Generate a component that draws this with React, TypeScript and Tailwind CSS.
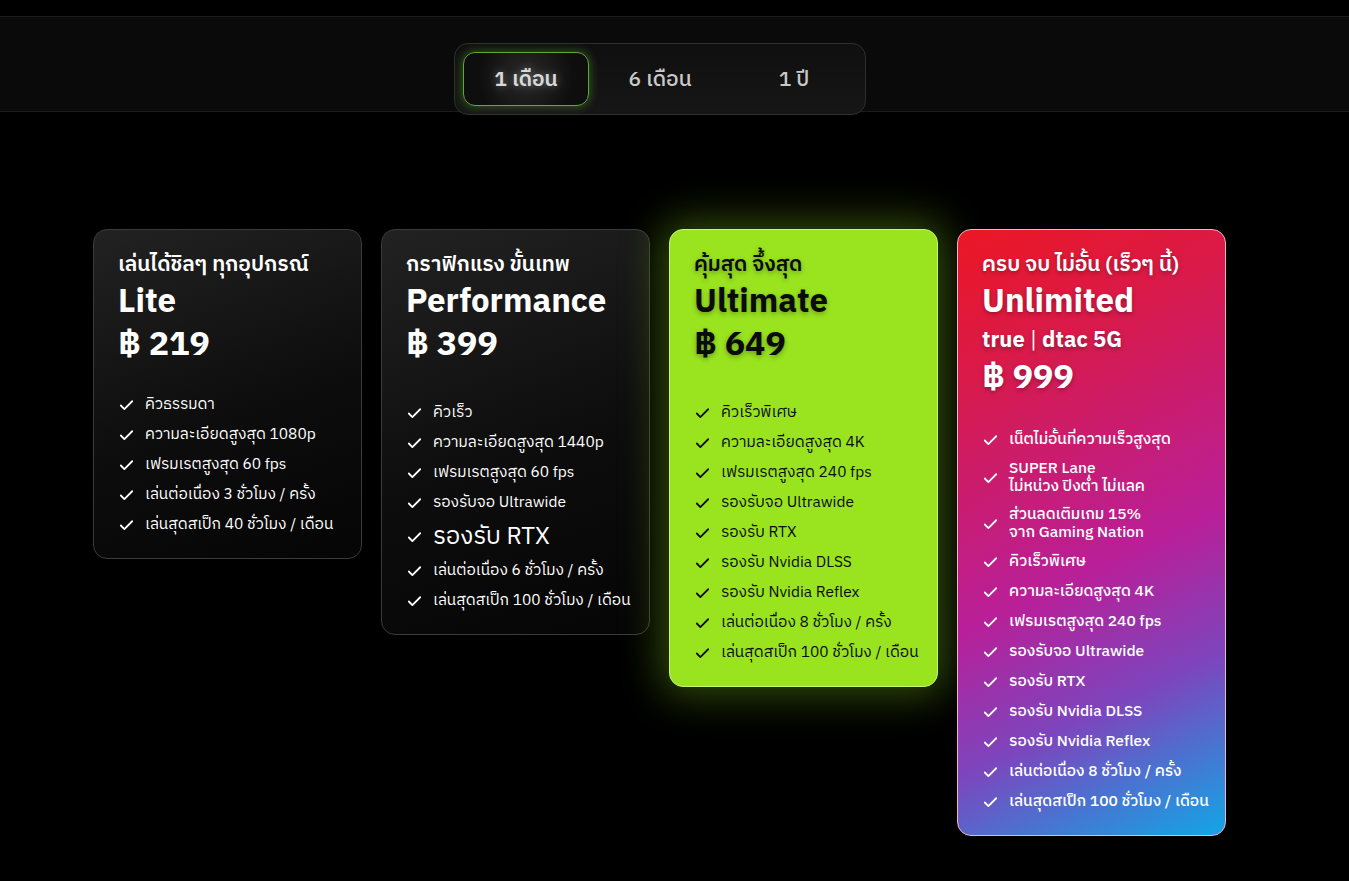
import { Check } from "lucide-react";

type Feature = { text: string; big?: boolean };

type Plan = {
  tagline: string;
  name: string;
  sub?: string;
  price: string;
  listTop: string;
  features: Feature[];
  variant: "dark" | "lime" | "red";
};

const plans: Plan[] = [
  {
    tagline: "เล่นได้ชิลๆ ทุกอุปกรณ์",
    name: "Lite",
    price: "฿ 219",
    variant: "dark",
    listTop: "mt-[22px]",
    features: [
      { text: "คิวธรรมดา" },
      { text: "ความละเอียดสูงสุด 1080p" },
      { text: "เฟรมเรตสูงสุด 60 fps" },
      { text: "เล่นต่อเนื่อง 3 ชั่วโมง / ครั้ง" },
      { text: "เล่นสุดสเป็ก 40 ชั่วโมง / เดือน" },
    ],
  },
  {
    tagline: "กราฟิกแรง ขั้นเทพ",
    name: "Performance",
    price: "฿ 399",
    variant: "dark",
    listTop: "mt-[30px]",
    features: [
      { text: "คิวเร็ว" },
      { text: "ความละเอียดสูงสุด 1440p" },
      { text: "เฟรมเรตสูงสุด 60 fps" },
      { text: "รองรับจอ Ultrawide" },
      { text: "รองรับ RTX", big: true },
      { text: "เล่นต่อเนื่อง 6 ชั่วโมง / ครั้ง" },
      { text: "เล่นสุดสเป็ก 100 ชั่วโมง / เดือน" },
    ],
  },
  {
    tagline: "คุ้มสุด จึ้งสุด",
    name: "Ultimate",
    price: "฿ 649",
    variant: "lime",
    listTop: "mt-[30px]",
    features: [
      { text: "คิวเร็วพิเศษ" },
      { text: "ความละเอียดสูงสุด 4K" },
      { text: "เฟรมเรตสูงสุด 240 fps" },
      { text: "รองรับจอ Ultrawide" },
      { text: "รองรับ RTX" },
      { text: "รองรับ Nvidia DLSS" },
      { text: "รองรับ Nvidia Reflex" },
      { text: "เล่นต่อเนื่อง 8 ชั่วโมง / ครั้ง" },
      { text: "เล่นสุดสเป็ก 100 ชั่วโมง / เดือน" },
    ],
  },
  {
    tagline: "ครบ จบ ไม่อั้น (เร็วๆ นี้)",
    name: "Unlimited",
    sub: "true | dtac 5G",
    price: "฿ 999",
    variant: "red",
    listTop: "mt-[24px]",
    features: [
      { text: "เน็ตไม่อั้นที่ความเร็วสูงสุด" },
      { text: "SUPER Lane\nไม่หน่วง ปิงต่ำ ไม่แลค" },
      { text: "ส่วนลดเติมเกม 15%\nจาก Gaming Nation" },
      { text: "คิวเร็วพิเศษ" },
      { text: "ความละเอียดสูงสุด 4K" },
      { text: "เฟรมเรตสูงสุด 240 fps" },
      { text: "รองรับจอ Ultrawide" },
      { text: "รองรับ RTX" },
      { text: "รองรับ Nvidia DLSS" },
      { text: "รองรับ Nvidia Reflex" },
      { text: "เล่นต่อเนื่อง 8 ชั่วโมง / ครั้ง" },
      { text: "เล่นสุดสเป็ก 100 ชั่วโมง / เดือน" },
    ],
  },
];

const cardStyles = {
  dark: "border-[#3b3b3b] bg-[linear-gradient(160deg,#222222_0%,#0d0d0d_55%,#050505_100%)] text-white",
  lime: "border-[#c8f56a] bg-[#99e31f] text-[#0b0b0b] shadow-[0_0_40px_8px_rgba(140,220,30,0.35)]",
  red: "border-[#f3b3c8] bg-[linear-gradient(155deg,#ec1723_0%,#d81a4c_22%,#b91f98_55%,#7d45bd_75%,#11a6e6_100%)] text-white",
};

function PlanCard({ plan }: { plan: Plan }) {
  const lime = plan.variant === "lime";
  const red = plan.variant === "red";
  const shadow = lime
    ? "[text-shadow:0_2px_5px_rgba(0,0,0,0.3)]"
    : red
      ? "[text-shadow:0_2px_4px_rgba(0,0,0,0.3)]"
      : "";

  return (
    <div
      className={`w-[269px] shrink-0 rounded-[14px] border px-[24px] pt-[21px] pb-[18px] ${cardStyles[plan.variant]}`}
    >
      <div className={shadow}>
        <p className="text-[21px] font-semibold leading-[28px]">{plan.tagline}</p>
        <p className="mt-[5px] text-[33px] font-bold leading-[38px]">{plan.name}</p>
        {plan.sub && (
          <p className="mt-[2px] text-[22px] font-bold leading-[34px]">
            true <span className="font-normal">|</span> dtac 5G
          </p>
        )}
        <p className={`${plan.sub ? "-mt-[3px]" : ""} text-[34px] font-bold leading-[46px]`}>
          {plan.price}
        </p>
      </div>

      <ul className={`${plan.listTop} flex flex-col`}>
        {plan.features.map((f) => (
          <li
            key={f.text}
            className={`flex items-center gap-[10px] py-[5px] ${f.big ? "min-h-[38px]" : "min-h-[30px]"} ${
              red ? "font-medium" : ""
            }`}
          >
            <Check size={17} strokeWidth={2.5} className="shrink-0" />
            <span
              className={`whitespace-pre ${
                f.big ? "text-[24px] leading-[28px]" : "text-[15.5px] leading-[18px]"
              }`}
            >
              {f.text}
            </span>
          </li>
        ))}
      </ul>
    </div>
  );
}

export default function App() {
  const periods = ["1 เดือน", "6 เดือน", "1 ปี"];

  return (
    <div className="min-h-[881px] bg-black pt-[16px] font-['IBM_Plex_Sans_Thai','Noto_Sans_Thai','Noto_Sans','Liberation_Sans',sans-serif]">
      <div className="h-[96px] border-y border-[#1c1c1c] bg-[#0a0a0a]">
        <div className="flex w-[1320px] justify-center pt-[26px]">
          <div className="flex h-[72px] gap-[8px] rounded-[14px] border border-[#2f2f2f] bg-[linear-gradient(180deg,#0f0f0f,#161616)] p-[8px]">
            {periods.map((p, i) => (
              <button
                key={p}
                className={`flex w-[126px] items-center justify-center rounded-[12px] pt-[3px] text-[21px] ${
                  i === 0
                    ? "border border-[#5fa83a] bg-[radial-gradient(circle_at_50%_45%,#2a2a2a,#0e0e0e_70%)] font-semibold text-[#d8d8d8] shadow-[0_0_10px_1px_rgba(90,170,50,0.45)] [text-shadow:0_0_8px_rgba(255,255,255,0.35)]"
                    : "font-medium text-[#c9c9c9]"
                }`}
              >
                {p}
              </button>
            ))}
          </div>
        </div>
      </div>

      <div className="mt-[117px] flex w-[1319px] items-start justify-center gap-[19px]">
        {plans.map((plan) => (
          <PlanCard key={plan.name} plan={plan} />
        ))}
      </div>
    </div>
  );
}
